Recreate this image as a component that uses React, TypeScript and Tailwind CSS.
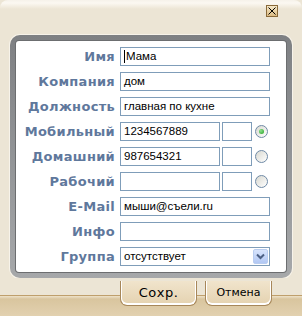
import React from "react";

const rows = [
  { label: "Имя", value: "Мама", caret: true },
  { label: "Компания", value: "дом" },
  { label: "Должность", value: "главная по кухне" },
  { label: "Мобильный", value: "1234567889", phone: true, checked: true },
  { label: "Домашний", value: "987654321", phone: true },
  { label: "Рабочий", value: "", phone: true },
  { label: "E-Mail", value: "мыши@съели.ru" },
  { label: "Инфо", value: "" },
  { label: "Группа", value: "отсутствует", select: true },
];

function Radio({ checked }: { checked?: boolean }) {
  return (
    <div className="ml-[3px] w-[13px] h-[13px] rounded-full border border-[#6f8aa6] bg-[linear-gradient(135deg,#d8d8d0,#ffffff)] flex items-center justify-center">
      {checked && <div className="w-[5px] h-[5px] rounded-full bg-[radial-gradient(circle_at_35%_35%,#8ee08e,#21a121)]" />}
    </div>
  );
}

function Field({ row }: { row: (typeof rows)[number] }) {
  const box = "h-[19px] border border-[#7f9db9] bg-white flex items-center px-[3px] text-[11.5px] text-black";
  if (row.phone) {
    return (
      <div className="flex items-center">
        <div className={`${box} w-[100px]`}>{row.value}</div>
        <div className={`${box} w-[30px] ml-[2px]`} />
        <Radio checked={row.checked} />
      </div>
    );
  }
  if (row.select) {
    return (
      <div className={`${box} w-[150px] justify-between pr-[1px]`}>
        <span>{row.value}</span>
        <div className="w-[15px] h-[15px] rounded-[2px] border border-[#b9cdf0] bg-[linear-gradient(#d8e4fc,#b2c8f4)] flex items-center justify-center">
          <svg width="9" height="7" viewBox="0 0 9 7">
            <path d="M1 1.5 L4.5 5 L8 1.5" stroke="#4d6185" strokeWidth="2" fill="none" />
          </svg>
        </div>
      </div>
    );
  }
  return (
    <div className={`${box} w-[150px]`}>
      {row.caret && <span className="w-px h-[13px] bg-black mr-px" />}
      {row.value}
    </div>
  );
}

export default function App() {
  return (
    <div className="w-[302px] h-[316px] bg-[#ece5d5] flex flex-col overflow-hidden font-['Liberation_Sans',sans-serif]">
      <div className="h-[35px] rounded-t-[8px] bg-[linear-gradient(#f6f2ea_0px,#fbf8f2_3px,#ece5d5_9px)] flex justify-end pr-[24px] pt-[5px]">
        <div className="w-[12px] h-[12px] border border-[#8a6a3a] bg-[linear-gradient(#f6e8c8,#dcbc84)] flex items-center justify-center">
          <svg width="8" height="8" viewBox="0 0 8 8">
            <path d="M0.5 0.5 L7.5 7.5 M7.5 0.5 L0.5 7.5" stroke="#000" strokeWidth="1" />
          </svg>
        </div>
      </div>

      <div className="mx-[10px] h-[243px] rounded-[10px] p-[6px] bg-[linear-gradient(#7e8083,#a6a8aa)] shadow-[0_0_0_1px_#f7f3ea]">
        <div className="h-full bg-white rounded-[3px] pt-[6px] flex flex-col gap-[6px] shadow-[0_0_0_1px_#6c6e70]">
          {rows.map((row) => (
            <div key={row.label} className="flex items-center h-[19px]">
              <div className="w-[104px] text-right pr-[5px] text-[13px] font-bold tracking-[0.3px] text-[#5f789c] font-['DejaVu_Sans',sans-serif]">
                {row.label}
              </div>
              <Field row={row} />
            </div>
          ))}
        </div>
      </div>

      <div className="flex-1 flex gap-[8px] pl-[120px] bg-[linear-gradient(#ece5d5_0px,#ece5d5_17px,#bf9f6c_17px,#bf9f6c_18px,#eee2ca_18px,#d9c59e_21px,#e2d1b0_38px)]">
        <div className="mt-[3px] w-[77px] h-[25px] rounded-b-[7px] border border-t-0 border-[#a7875a] shadow-[inset_0_-1px_0_1px_#ffffff] bg-[linear-gradient(#f0e4cc,#e4d2b0)] flex items-center justify-center text-[13px] tracking-[0.5px] text-black font-['DejaVu_Sans',sans-serif]">
          Сохр.
        </div>
        <div className="mt-[3px] w-[67px] h-[25px] rounded-b-[7px] border border-t-0 border-[#a7875a] shadow-[inset_0_-1px_0_1px_#ffffff] bg-[linear-gradient(#f0e4cc,#e4d2b0)] flex items-center justify-center text-[11px] text-black font-['DejaVu_Sans',sans-serif]">
          Отмена
        </div>
      </div>
    </div>
  );
}
